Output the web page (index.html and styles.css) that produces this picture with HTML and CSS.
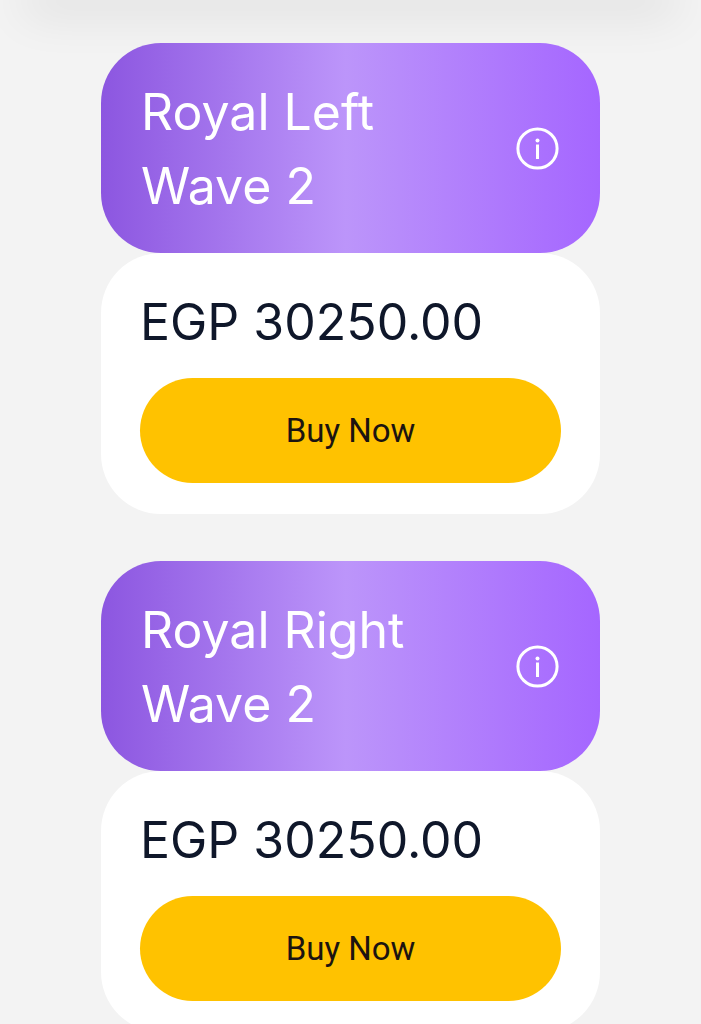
FILE: index.html
```html
<!DOCTYPE html>
<html lang="en">
<head>
    <meta charset="UTF-8">
    <meta name="viewport" content="width=device-width, initial-scale=1.0">
    <title>Tickets</title>
    <link rel="stylesheet" href="styles.css">
</head>
<body>

    <header class="topbar"></header>

    <main class="tickets">
        <article class="ticket">
            <div class="ticket-head">
                <h2>Royal Left Wave 2</h2>
                <button class="info" type="button" aria-label="Royal Left Wave 2 details">
                    <svg viewBox="0 0 44 44" width="44" height="44">
                        <circle cx="21.5" cy="21.5" r="19.6"/>
                        <path d="M21.5 17.5v14.5"/>
                        <circle class="dot" cx="21.5" cy="13.5" r="2"/>
                    </svg>
                </button>
            </div>
            <div class="ticket-body">
                <p class="price">EGP 30250.00</p>
                <button class="buy" type="button">Buy Now</button>
            </div>
        </article>

        <article class="ticket">
            <div class="ticket-head">
                <h2>Royal Right Wave 2</h2>
                <button class="info" type="button" aria-label="Royal Right Wave 2 details">
                    <svg viewBox="0 0 44 44" width="44" height="44">
                        <circle cx="21.5" cy="21.5" r="19.6"/>
                        <path d="M21.5 17.5v14.5"/>
                        <circle class="dot" cx="21.5" cy="13.5" r="2"/>
                    </svg>
                </button>
            </div>
            <div class="ticket-body">
                <p class="price">EGP 30250.00</p>
                <button class="buy" type="button">Buy Now</button>
            </div>
        </article>
    </main>

</body>
</html>
```
FILE: styles.css
```css
body {
    font-family: Inter, "Liberation Sans", sans-serif;
    margin: 0;
    background-color: #f3f3f3;
    color: #0f172a;
}

/* only the shadow of the bar shows above the list */
.topbar {
    height: 0;
    margin: 0 36px;
    box-shadow: 0 0 48px 12px rgba(0, 0, 0, 0.11);
}

.tickets {
    display: flex;
    flex-direction: column;
    gap: 47px;
    padding: 43px 101px;
}

.ticket-head {
    display: flex;
    align-items: center;
    justify-content: space-between;
    padding: 32px 40px 30px;
    border-radius: 60px;
    background: linear-gradient(90deg, #8c56e0, #bc95fa 49%, #a566ff);
}

.ticket-head h2 {
    margin: 0;
    max-width: 300px;
    color: #fff;
    font-size: 50px;
    font-weight: 400;
    line-height: 74px;
}

.info {
    padding: 0;
    border: none;
    background: none;
    cursor: pointer;
}

.info svg {
    display: block;
    fill: none;
    stroke: #fff;
    stroke-width: 3;
}

.info .dot {
    fill: #fff;
    stroke: none;
}

.ticket-body {
    padding: 32px 39px 31px;
    border-radius: 60px;
    background-color: #fff;
}

.price {
    margin: 0 0 19px;
    font-size: 50px;
    line-height: 74px;
}

.buy {
    width: 100%;
    height: 105px;
    border: none;
    border-radius: 53px;
    background-color: #ffc200;
    color: #1c1410;
    font-family: Roboto, sans-serif;
    font-size: 33px;
    cursor: pointer;
}
```
